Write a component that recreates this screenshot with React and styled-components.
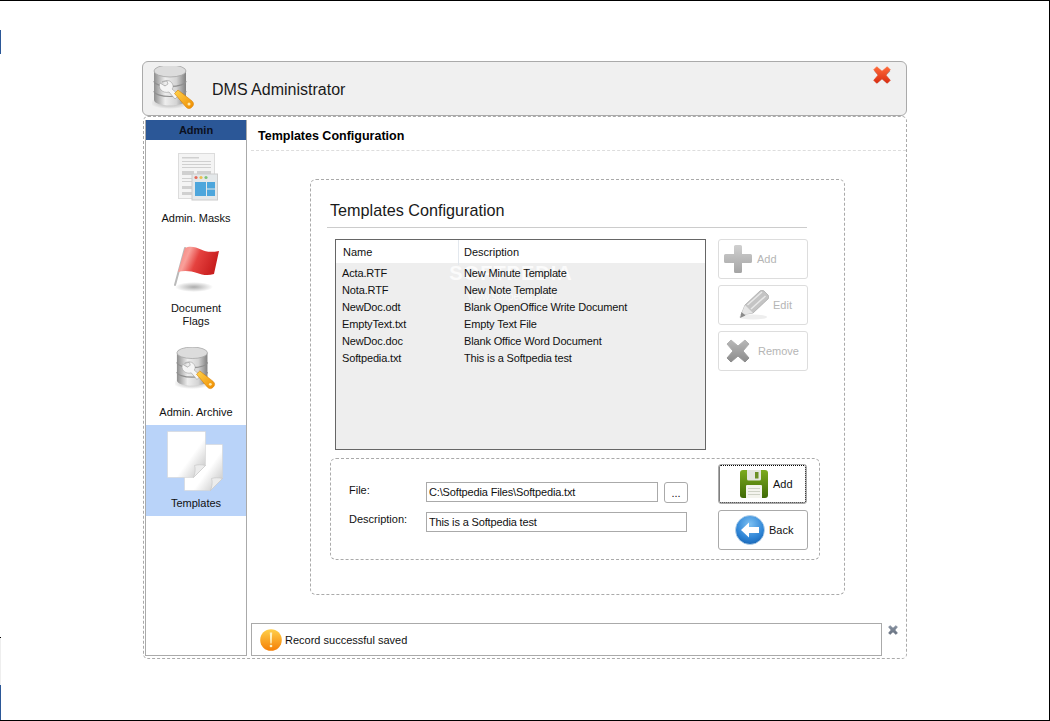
import React from 'react';
import styled, { createGlobalStyle } from 'styled-components';

const GlobalStyle = createGlobalStyle`
  html, body {
    margin: 0;
    padding: 0;
    background: #fff;
  }
  * {
    box-sizing: border-box;
  }
`;

const Desktop = styled.div`
  position: relative;
  width: 1050px;
  height: 721px;
  padding: 60px 0 0 142px;
  background: #fff;
  border-top: 1px solid #000;
  border-bottom: 1px solid #000;
  border-right: 1px solid #000;
  font-family: 'Liberation Sans', Arial, sans-serif;
  font-size: 11px;
  color: #111;
  overflow: hidden;
`;

const EdgeStrip = styled.div`
  position: absolute;
  left: 0;
  top: ${(p) => p.$top}px;
  width: 1px;
  height: ${(p) => p.$h}px;
  background: ${(p) => p.$color};
`;

const TitleBar = styled.header`
  position: relative;
  display: flex;
  align-items: center;
  width: 765px;
  height: 55px;
  padding-left: 9px;
  gap: 16px;
  background: #f0f0f0;
  border: 1px solid #aaa;
  border-radius: 6px;
`;

const AppTitle = styled.h1`
  margin: 0;
  padding-top: 2px;
  font-size: 16px;
  font-weight: normal;
  color: #1a1a1a;
`;

const CloseIcon = styled.span`
  position: absolute;
  top: 4px;
  right: 15px;
`;

const WindowBody = styled.div`
  display: flex;
  width: 764px;
  height: 543px;
  margin: 0 0 0 1px;
  padding: 3px 0 1px 1px;
  border: 1px dashed #aaa;
  border-radius: 5px;
`;

const Sidebar = styled.nav`
  flex: none;
  width: 102px;
  height: 536px;
  border: 1px solid #aaa;
  border-top: none;
`;

const SidebarHead = styled.div`
  height: 20px;
  line-height: 20px;
  text-align: center;
  font-weight: bold;
  background: #2b5797;
  color: #0b1020;
`;

const NavItem = styled.div`
  display: flex;
  flex-direction: column;
  align-items: center;
  height: ${(p) => p.$h}px;
  padding-top: ${(p) => p.$top}px;
  gap: ${(p) => p.$gap}px;
  background: ${(p) => (p.$active ? '#b9d3f9' : 'transparent')};
`;

const NavLabel = styled.span`
  line-height: 13px;
  text-align: center;
`;

const Main = styled.main`
  flex: 1;
  display: flex;
  flex-direction: column;
  min-width: 0;
  padding-bottom: 1px;
`;

const PageHeading = styled.div`
  height: 31px;
  margin-left: 4px;
  padding: 1px 0 0 7px;
  line-height: 30px;
  font-size: 12.5px;
  font-weight: bold;
  color: #000;
  border-bottom: 1px dashed #ddd;
`;

const ConfigPanel = styled.section`
  width: 535px;
  height: 416px;
  margin: 28px 0 0 63px;
  border: 1px dashed #aaa;
  border-radius: 6px;
`;

const PanelTitle = styled.h2`
  height: 48px;
  margin: 0 0 0 16px;
  width: 480px;
  padding: 20px 0 0 3px;
  font-size: 16.2px;
  line-height: 20px;
  font-weight: normal;
  color: #1a1a1a;
  border-bottom: 1px solid #ccc;
`;

const ListRow = styled.div`
  display: flex;
  gap: 12px;
  margin: 11px 0 0 24px;
`;

const TemplateList = styled.div`
  position: relative;
  width: 371px;
  height: 211px;
  background: #eee;
  border: 1px solid #666;
`;

const ListHead = styled.div`
  display: grid;
  grid-template-columns: 122px 1fr;
  height: 23px;
  background: #fff;
  line-height: 25px;
`;

const HeadCell = styled.div`
  padding-left: ${(p) => (p.$sep ? 5 : 6)}px;
  border-left: 1px solid ${(p) => (p.$sep ? '#e3e8ee' : 'transparent')};
`;

const ListBody = styled.div`
  position: relative;
  padding-top: 2px;
`;

const ListLine = styled.div`
  display: grid;
  grid-template-columns: 122px 1fr;
  height: 17px;
  line-height: 17px;
`;

const Cell = styled.div`
  padding-left: 6px;
  white-space: nowrap;
  letter-spacing: -0.15px;
`;

const WatermarkBox = styled.div`
  position: absolute;
  left: 110px;
  top: 22px;
  width: 130px;
  text-align: center;
  color: #fbfbfb;
  pointer-events: none;
`;

const WatermarkBig = styled.div`
  font-size: 20px;
  line-height: 22px;
  font-weight: bold;
  letter-spacing: 1px;
`;

const WatermarkSmall = styled.div`
  margin-top: 7px;
  font-size: 10px;
  line-height: 12px;
`;

const SideButtons = styled.div`
  display: flex;
  flex-direction: column;
  gap: 6px;
`;

const ActionButton = styled.button`
  display: flex;
  align-items: center;
  gap: ${(p) => p.$gap}px;
  width: 90px;
  height: 40px;
  padding: 0 0 0 ${(p) => p.$pad}px;
  background: #fff;
  border: 1px solid ${(p) => (p.disabled ? '#ddd' : '#aaa')};
  border-radius: 3px;
  font: inherit;
  color: ${(p) => (p.disabled ? '#b5b5b5' : '#111')};
`;

const FocusButton = styled(ActionButton)`
  width: 89px;
  outline: 1px dotted #000;
  outline-offset: -2px;
`;

const FormPanel = styled.div`
  display: flex;
  width: 490px;
  height: 102px;
  margin: 8px 0 0 19px;
  padding: 5px 0 0 18px;
  border: 1px dashed #aaa;
  border-radius: 6px;
`;

const Fields = styled.div`
  display: grid;
  grid-template-columns: 71px 232px 24px;
  grid-template-rows: 20px 20px;
  column-gap: 6px;
  row-gap: 10px;
  width: 369px;
  margin: 18px 0 0 0;
  align-items: start;
`;

const FieldLabel = styled.label`
  padding-top: ${(p) => p.$nudge || 0}px;
  line-height: 15px;
`;

const TextBox = styled.input`
  width: ${(p) => (p.$wide ? '261px' : '232px')};
  height: 20px;
  padding: 0 2px;
  border: 1px solid #aaa;
  background: #fff;
  font: inherit;
  letter-spacing: -0.15px;
  color: #111;
  grid-column: ${(p) => (p.$wide ? '2 / 4' : 'auto')};
`;

const BrowseButton = styled.button`
  width: 24px;
  height: 21px;
  padding: 0;
  background: #fff;
  border: 1px solid #aaa;
  border-radius: 3px;
  font: inherit;
  color: #111;
`;

const FormButtons = styled.div`
  display: flex;
  flex-direction: column;
  gap: 6px;
`;

const StatusRow = styled.div`
  position: relative;
  display: flex;
  align-items: center;
  gap: 3px;
  width: 631px;
  height: 33px;
  margin: auto 0 0 4px;
  padding-left: 8px;
  background: #fff;
  border: 1px solid #aaa;
`;

const DismissIcon = styled.span`
  position: absolute;
  top: 1px;
  left: 636px;
`;

const NudgedSvg = styled.svg`
  display: block;
`;

function DbIcon({ id, width = 44, height = 46 }) {
  return (
    <NudgedSvg width={width} height={height} viewBox="2 2 44 46">
      <defs>
        <linearGradient id={`${id}-s`} x1="0" x2="1" y1="0" y2="0">
          <stop offset="0" stopColor="#8e8e8e" />
          <stop offset="0.35" stopColor="#eeeeee" />
          <stop offset="0.7" stopColor="#d4d4d4" />
          <stop offset="1" stopColor="#808080" />
        </linearGradient>
        <linearGradient id={`${id}-o`} x1="0" x2="1" y1="0" y2="1">
          <stop offset="0" stopColor="#ffd34d" />
          <stop offset="1" stopColor="#ef8c00" />
        </linearGradient>
        <radialGradient id={`${id}-sh`}>
          <stop offset="0" stopColor="#777" stopOpacity="0.6" />
          <stop offset="1" stopColor="#777" stopOpacity="0" />
        </radialGradient>
      </defs>
      <ellipse cx="20" cy="39" rx="20" ry="6" fill={`url(#${id}-sh)`} />
      <path d="M4 7v29c0 3 7 5.500 16 5.500s16-2.500 16-5.500V7z" fill={`url(#${id}-s)`} />
      <ellipse cx="20" cy="7" rx="16" ry="6" fill="#dcdcdc" stroke="#a5a5a5" strokeWidth="0.8" />
      <path d="M4 17c0 3 7 5.500 16 5.500S36 20 36 17" fill="none" stroke="#8f8f8f" strokeWidth="1.200" />
      <path d="M4 27c0 3 7 5.500 16 5.500S36 30 36 27" fill="none" stroke="#8f8f8f" strokeWidth="1.200" />
      <path d="M12 18c3-2 7-2 9 0s3 5 1 7l7 6-4 4-6-7c-3 1-6 0-8-2s-2-5-1-7l5 3 3-2-1-3z" fill="#f5f5f5" stroke="#9a9a9a" strokeWidth="0.6" />
      <path d="M24.500 29.500l3.500-3.500 14 11c2 2 2 4 0 6s-4 2-6 0z" fill={`url(#${id}-o)`} stroke="#d67f00" strokeWidth="0.6" />
      <circle cx="39" cy="40" r="1.500" fill="#ffe9a8" />
    </NudgedSvg>
  );
}

function MaskIcon() {
  return (
    <NudgedSvg width="44" height="48" viewBox="-4 0 44 48">
      <rect x="0.500" y="0.500" width="36" height="45" fill="#f4f4f4" stroke="#dcdcdc" />
      <g fill="#d0d0d0">
        <rect x="4" y="4" width="17" height="1.500" />
        <rect x="4" y="8" width="29" height="1" />
        <rect x="4" y="11" width="29" height="1" />
        <rect x="4" y="14" width="29" height="1" />
        <rect x="4" y="18" width="12" height="4" />
        <rect x="19" y="18" width="14" height="4" />
        <rect x="4" y="25" width="10" height="1" />
        <rect x="4" y="28" width="10" height="1" />
        <rect x="4" y="33" width="10" height="3" />
        <rect x="4" y="39" width="10" height="3" />
      </g>
      <rect x="14" y="21" width="25.500" height="26" fill="#e4e8ea" stroke="#ccc" />
      <circle cx="18" cy="24.500" r="1.600" fill="#e46b5a" />
      <circle cx="23" cy="24.500" r="1.600" fill="#ecc04f" />
      <circle cx="28" cy="24.500" r="1.600" fill="#7fc27a" />
      <rect x="17" y="29" width="11" height="14" fill="#4da6dc" />
      <rect x="29" y="29" width="8" height="6.500" fill="#4da6dc" />
      <rect x="29" y="36.500" width="8" height="6.500" fill="#4da6dc" />
    </NudgedSvg>
  );
}

function FlagIcon() {
  return (
    <NudgedSvg width="48" height="47" viewBox="0 0 48 47">
      <defs>
        <linearGradient id="flag-red" x1="0" x2="1" y1="0" y2="0.300">
          <stop offset="0" stopColor="#f47e78" />
          <stop offset="0.3" stopColor="#f9a09a" />
          <stop offset="0.55" stopColor="#e5423f" />
          <stop offset="1" stopColor="#c91f1f" />
        </linearGradient>
        <radialGradient id="flag-sh">
          <stop offset="0" stopColor="#888" stopOpacity="0.7" />
          <stop offset="1" stopColor="#888" stopOpacity="0" />
        </radialGradient>
      </defs>
      <ellipse cx="22" cy="41" rx="19" ry="5" fill="url(#flag-sh)" />
      <path d="M3 39l10-37" stroke="#b9b9b9" strokeWidth="2" strokeLinecap="round" />
      <path d="M13 2c5-2.500 11-1 16 1.500s10 3 18 1.500l-5 23c-6 2-12 1-17-1S12 24 6 26z" fill="url(#flag-red)" />
    </NudgedSvg>
  );
}

function PagesIcon() {
  return (
    <NudgedSvg width="58" height="60" viewBox="0 0 58 60">
      <defs>
        <linearGradient id="page-a" x1="0.200" x2="1" y1="0.300" y2="1">
          <stop offset="0.45" stopColor="#ffffff" />
          <stop offset="1" stopColor="#bcbcbc" />
        </linearGradient>
      </defs>
      <path d="M17.500 13.500h38v34l-12 12h-26z" fill="url(#page-a)" stroke="#d5d5d5" strokeWidth="0.600" />
      <path d="M55.500 47.500c-4-1-8-1-11 0 1 3 1 7-1 12z" fill="#ececec" stroke="#c4c4c4" strokeWidth="0.600" />
      <path d="M0.500 0.500h38v34l-12 12h-26z" fill="url(#page-a)" stroke="#d5d5d5" strokeWidth="0.600" />
      <path d="M38.500 34.500c-4-1-8-1-11 0 1 3 1 7-1 12z" fill="#ececec" stroke="#c4c4c4" strokeWidth="0.600" />
    </NudgedSvg>
  );
}

function PlusIcon() {
  return (
    <svg width="28" height="28" viewBox="0 0 28 28">
      <defs>
        <linearGradient id="plus-g" x1="0" x2="0" y1="0" y2="1">
          <stop offset="0" stopColor="#d0d0d0" />
          <stop offset="1" stopColor="#a4a4a4" />
        </linearGradient>
      </defs>
      <path d="M10 1.500q0-1.500 1.500-1.500h5q1.500 0 1.500 1.500V9h8.500q1.500 0 1.500 1.500v6q0 1.500-1.500 1.500H18v8.500q0 1.500-1.500 1.500h-5q-1.500 0-1.500-1.500V18H1.500Q0 18 0 16.500v-6Q0 9 1.500 9H10z" fill="url(#plus-g)" />
    </svg>
  );
}

function PencilIcon() {
  return (
    <svg width="30" height="30" viewBox="0 0 30 30">
      <ellipse cx="14" cy="27" rx="14" ry="2.500" fill="#eee" />
      <path d="M2 25l4-10L21 1c1-1 3-1 4 0l4 4c1 1 1 3 0 4L14 23z" fill="#c4c4c4" stroke="#a5a5a5" strokeWidth="0.700" />
      <path d="M8.500 15L23 2M12 19L26.500 6" stroke="#e8e8e8" strokeWidth="1.500" />
      <path d="M2 25l4-10 8 8z" fill="#e6e6e6" />
      <path d="M1 28l1.500-6 4 3.500z" fill="#8a8a8a" />
    </svg>
  );
}

function CrossIcon({ id, size, from, to, shadow }) {
  return (
    <svg width={size} height={size} viewBox="0 0 24 24">
      <defs>
        <linearGradient id={id} x1="0" x2="0" y1="0" y2="1">
          <stop offset="0" stopColor={from} />
          <stop offset="1" stopColor={to} />
        </linearGradient>
      </defs>
      {shadow && <path d="M6 3l7 5 7-5 3 4-6 6 5 7-4 3-6-6-6 6-4-3 5-7-5-6z" fill={shadow} />}
      <path d="M5 1l7 6 7-6 4 4-6 7 6 7-4 4-7-6-7 6-4-4 6-7-6-7z" fill={`url(#${id})`} stroke={`url(#${id})`} strokeWidth="1" strokeLinejoin="round" />
    </svg>
  );
}

function FloppyIcon() {
  return (
    <svg width="28" height="28" viewBox="0 0 28 28">
      <defs>
        <linearGradient id="floppy-g" x1="0" x2="0" y1="0" y2="1">
          <stop offset="0" stopColor="#7cab1e" />
          <stop offset="1" stopColor="#3f6a06" />
        </linearGradient>
      </defs>
      <path d="M3 0h22q3 0 3 3v22q0 3-3 3H3q-3 0-3-3V3q0-3 3-3z" fill="url(#floppy-g)" />
      <path d="M7 0h14v9q0 1.500-1.500 1.500h-11Q7 10.500 7 9z" fill="#e4e6df" />
      <rect x="15" y="2" width="3.500" height="6.500" fill="#6b8f24" />
      <path d="M6 16q0-1 1-1h14q1 0 1 1v12H6z" fill="#f4f4ee" />
      <path d="M8 18.500h12M8 21.500h12M8 24.500h12" stroke="#cfd2c6" strokeWidth="1" />
    </svg>
  );
}

function BackIcon() {
  return (
    <svg width="30" height="30" viewBox="0 0 30 30">
      <defs>
        <radialGradient id="back-g" cx="0.500" cy="0.300" r="0.800">
          <stop offset="0" stopColor="#7cc0f2" />
          <stop offset="0.6" stopColor="#2f85d6" />
          <stop offset="1" stopColor="#125aa8" />
        </radialGradient>
      </defs>
      <circle cx="15" cy="15" r="14.500" fill="url(#back-g)" stroke="#b7d3ea" strokeWidth="0.800" />
      <path d="M6 15l8-7.500v4.500h10v6H14v4.500z" fill="#fff" />
    </svg>
  );
}

function WarnIcon() {
  return (
    <svg width="22" height="22" viewBox="0 0 22 22">
      <defs>
        <linearGradient id="warn-g" x1="0" x2="0" y1="0" y2="1">
          <stop offset="0" stopColor="#ffd04a" />
          <stop offset="1" stopColor="#f57f06" />
        </linearGradient>
      </defs>
      <circle cx="11" cy="11" r="10.800" fill="url(#warn-g)" />
      <path d="M9.800 3.500h2.400l-.6 11h-1.200z" fill="#fff3c4" />
      <circle cx="11" cy="17" r="1.300" fill="#fff3c4" />
    </svg>
  );
}

const templates = [
  ['Acta.RTF', 'New Minute Template'],
  ['Nota.RTF', 'New Note Template'],
  ['NewDoc.odt', 'Blank OpenOffice Write Document'],
  ['EmptyText.txt', 'Empty Text File'],
  ['NewDoc.doc', 'Blank Office Word Document'],
  ['Softpedia.txt', 'This is a Softpedia test'],
];

function App() {
  return (
    <Desktop>
      <GlobalStyle />
      <EdgeStrip $top={29} $h={24} $color="#2b5797" />
      <EdgeStrip $top={636} $h={1} $color="#000" />
      <EdgeStrip $top={637} $h={47} $color="#eee" />
      <EdgeStrip $top={684} $h={35} $color="#2b5797" />

      <TitleBar>
        <DbIcon id="db-title" />
        <AppTitle>DMS Administrator</AppTitle>
        <CloseIcon>
          <CrossIcon id="close-x" size={18} from="#ff6a3a" to="#d92c10" shadow="#9a9a9a" />
        </CloseIcon>
      </TitleBar>

      <WindowBody>
        <Sidebar>
          <SidebarHead>Admin</SidebarHead>
          <NavItem $h={93} $top={13} $gap={11}>
            <MaskIcon />
            <NavLabel>Admin. Masks</NavLabel>
          </NavItem>
          <NavItem $h={100} $top={13} $gap={9}>
            <FlagIcon />
            <NavLabel>
              Document
              <br />
              Flags
            </NavLabel>
          </NavItem>
          <NavItem $h={92} $top={14} $gap={13}>
            <DbIcon id="db-nav" width={42} height={46} />
            <NavLabel>Admin. Archive</NavLabel>
          </NavItem>
          <NavItem $active $h={91} $top={6} $gap={6}>
            <PagesIcon />
            <NavLabel>Templates</NavLabel>
          </NavItem>
        </Sidebar>

        <Main>
          <PageHeading>Templates Configuration</PageHeading>
          <ConfigPanel>
            <PanelTitle>Templates Configuration</PanelTitle>
            <ListRow>
              <TemplateList>
                <ListHead>
                  <HeadCell>Name</HeadCell>
                  <HeadCell $sep>Description</HeadCell>
                </ListHead>
                <WatermarkBox>
                  <WatermarkBig>SOFTPEDIA</WatermarkBig>
                  <WatermarkSmall>www.softpedia.com</WatermarkSmall>
                </WatermarkBox>
                <ListBody>
                  {templates.map(([name, desc]) => (
                    <ListLine key={name}>
                      <Cell>{name}</Cell>
                      <Cell>{desc}</Cell>
                    </ListLine>
                  ))}
                </ListBody>
              </TemplateList>
              <SideButtons>
                <ActionButton disabled $pad={5} $gap={5}>
                  <PlusIcon />
                  Add
                </ActionButton>
                <ActionButton disabled $pad={20} $gap={4}>
                  <PencilIcon />
                  Edit
                </ActionButton>
                <ActionButton disabled $pad={7} $gap={8}>
                  <CrossIcon id="remove-x" size={24} from="#b8b8b8" to="#8c8c8c" />
                  Remove
                </ActionButton>
              </SideButtons>
            </ListRow>

            <FormPanel>
              <Fields>
                <FieldLabel $nudge={1}>File:</FieldLabel>
                <TextBox readOnly value="C:\Softpedia Files\Softpedia.txt" />
                <BrowseButton>...</BrowseButton>
                <FieldLabel>Description:</FieldLabel>
                <TextBox $wide readOnly value="This is a Softpedia test" />
              </Fields>
              <FormButtons>
                <FocusButton $pad={21} $gap={5}>
                  <FloppyIcon />
                  Add
                </FocusButton>
                <ActionButton $pad={16} $gap={4}>
                  <BackIcon />
                  Back
                </ActionButton>
              </FormButtons>
            </FormPanel>
          </ConfigPanel>

          <StatusRow>
            <WarnIcon />
            Record successful saved
            <DismissIcon>
              <CrossIcon id="dismiss-x" size={10} from="#8a94a3" to="#66707f" />
            </DismissIcon>
          </StatusRow>
        </Main>
      </WindowBody>
    </Desktop>
  );
}

export default App;
